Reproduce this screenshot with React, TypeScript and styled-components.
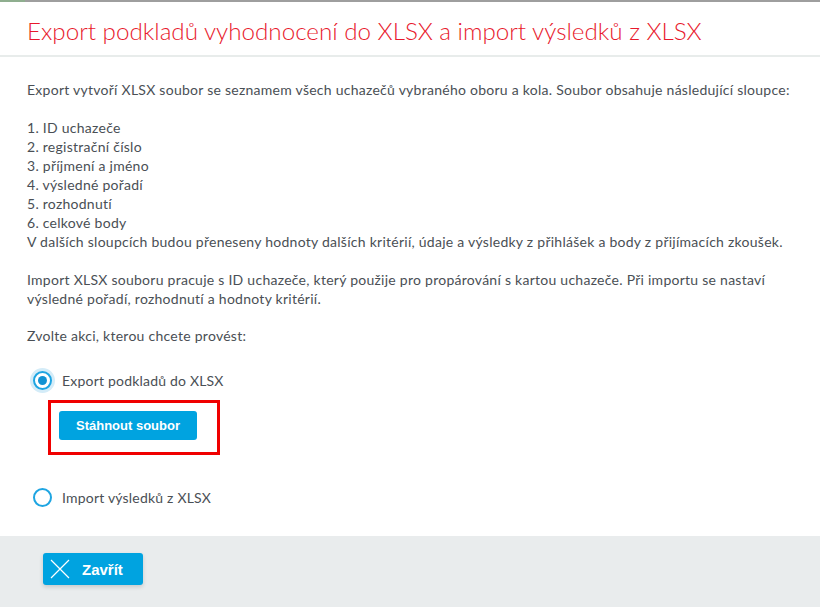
import React from "react";
import styled, { createGlobalStyle } from "styled-components";

const Global = createGlobalStyle`
  html, body { margin: 0; padding: 0; background: #fff; }
  body { font-family: Lato, "Noto Sans", sans-serif; color: #4a4f55; }
  * { box-sizing: border-box; }
`;

const Dialog = styled.div`
  width: 820px;
  height: 607px;
  display: flex;
  flex-direction: column;
  background: #fff;
  border-top: 2px solid #9e9e9e;
  position: relative;
`;

const Accent = styled.div`
  position: absolute;
  top: -2px;
  left: 0;
  width: 25px;
  height: 2px;
  background: #8fae8f;
`;

const Header = styled.div`
  height: 55px;
  padding: 0 27px;
  display: flex;
  align-items: center;
  border-bottom: 2px solid #e8eceb;
`;

const Title = styled.h1`
  margin: 0;
  font-family: Lato, sans-serif;
  font-weight: 300;
  font-size: 24.2px;
  color: #e8192c;
  white-space: nowrap;
  padding-top: 3px;
`;

const Body = styled.div`
  flex: 1;
  padding: 23px 27px 0;
  font-size: 14px;
  line-height: 19px;
  letter-spacing: 0.26px;
`;

const P = styled.p<{ $mb?: number }>`
  margin: 0 0 ${(p) => p.$mb ?? 19}px;
  white-space: pre-line;
`;

const Options = styled.div`
  display: flex;
  flex-direction: column;
  padding-left: 6px;
  letter-spacing: 0.2px;
`;

const RadioRow = styled.label<{ $mt?: number }>`
  display: flex;
  align-items: center;
  gap: 10px;
  height: 22px;
  margin-top: ${(p) => p.$mt ?? 0}px;
  font-size: 14px;
`;

const Radio = styled.span<{ $checked?: boolean }>`
  width: 19px;
  height: 19px;
  border-radius: 50%;
  border: 2px solid #1ea5e2;
  display: flex;
  align-items: center;
  justify-content: center;
  background: #fff;
  box-shadow: ${(p) => (p.$checked ? "0 0 0 3px #d4ecf8" : "none")};
  &::after {
    content: "";
    width: 9px;
    height: 9px;
    border-radius: 50%;
    background: ${(p) => (p.$checked ? "#1192d3" : "transparent")};
  }
`;

const Highlight = styled.div`
  margin: 9px 0 0 15px;
  width: 172px;
  height: 55px;
  border: 3px solid #f00000;
  padding: 8px 0 0 8px;
`;

const PrimaryButton = styled.button`
  height: 29px;
  width: 138px;
  border: none;
  border-radius: 3px;
  background: #00a3e0;
  color: #fff;
  font-family: "Liberation Sans", Arial, sans-serif;
  font-size: 13px;
  font-weight: 700;
  letter-spacing: 0;
  padding: 0;
  cursor: pointer;
`;

const Footer = styled.div`
  height: 71px;
  background: #e9eced;
  padding: 17px 43px;
`;

const CloseButton = styled.button`
  width: 100px;
  height: 32px;
  border: none;
  border-radius: 3px;
  background: #00a3e0;
  color: #fff;
  display: flex;
  align-items: center;
  padding: 0 0 0 7px;
  gap: 12px;
  font-family: "Liberation Sans", Arial, sans-serif;
  font-size: 15px;
  font-weight: 700;
  box-shadow: 0 2px 4px rgba(0, 0, 0, 0.15);
`;

export default function App() {
  return (
    <>
      <Global />
      <Dialog>
        <Accent />
        <Header>
          <Title>Export podkladů vyhodnocení do XLSX a import výsledků z XLSX</Title>
        </Header>
        <Body>
          <P>
            Export vytvoří XLSX soubor se seznamem všech uchazečů vybraného oboru a kola. Soubor obsahuje následující sloupce:
          </P>
          <P>
            {"1. ID uchazeče\n2. registrační číslo\n3. příjmení a jméno\n4. výsledné pořadí\n5. rozhodnutí\n6. celkové body\nV dalších sloupcích budou přeneseny hodnoty dalších kritérií, údaje a výsledky z přihlášek a body z přijímacích zkoušek."}
          </P>
          <P $mb={18}>
            Import XLSX souboru pracuje s ID uchazeče, který použije pro propárování s kartou uchazeče. Při importu se nastaví výsledné pořadí, rozhodnutí a hodnoty kritérií.
          </P>
          <P $mb={24}>Zvolte akci, kterou chcete provést:</P>
          <Options>
            <RadioRow>
              <Radio $checked />
              Export podkladů do XLSX
            </RadioRow>
            <Highlight>
              <PrimaryButton>Stáhnout soubor</PrimaryButton>
            </Highlight>
            <RadioRow $mt={31}>
              <Radio />
              Import výsledků z XLSX
            </RadioRow>
          </Options>
        </Body>
        <Footer>
          <CloseButton>
            <svg width="20" height="20" viewBox="0 0 20 20">
              <path d="M1 1 L19 19 M19 1 L1 19" stroke="#fff" strokeWidth="1.2" />
            </svg>
            Zavřít
          </CloseButton>
        </Footer>
      </Dialog>
    </>
  );
}
